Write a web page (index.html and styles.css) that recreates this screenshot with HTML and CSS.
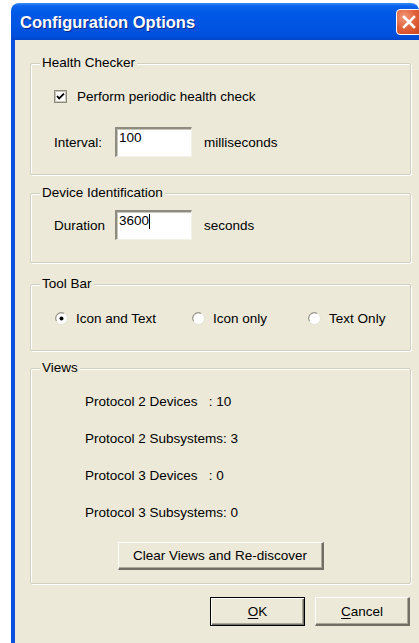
FILE: index.html
```html
<!DOCTYPE html>
<html>
<head>
<meta charset="utf-8">
<title>Configuration Options</title>
<link rel="stylesheet" href="styles.css">
</head>
<body>
<div class="window">
  <div class="titlebar">
    <span class="title">Configuration Options</span>
    <span class="close">
      <svg width="26" height="26" viewBox="0 0 26 26">
        <path d="M8 8 L18 18 M18 8 L8 18" stroke="#fff" stroke-width="2.6" stroke-linecap="square"/>
      </svg>
    </span>
  </div>
  <div class="client">
    <div class="group group-health">
      <span class="legend">Health Checker</span>
      <div class="row row-check">
        <svg class="checkbox" width="13" height="13" viewBox="0 0 13 13">
          <rect x="0.5" y="0.5" width="12" height="12" fill="#fff" stroke="#8d8b80"/>
          <rect x="1.5" y="1.5" width="10" height="10" fill="none" stroke="#c9c6b8"/>
          <path d="M3 6 L5.2 8.4 L10 3.6" fill="none" stroke="#000" stroke-width="1.8"/>
        </svg>
        <span>Perform periodic health check</span>
      </div>
      <div class="row row-field">
        <span class="field-label">Interval:</span>
        <span class="input">100</span>
        <span class="unit">milliseconds</span>
      </div>
    </div>

    <div class="group group-device">
      <span class="legend">Device Identification</span>
      <div class="row row-field">
        <span class="field-label">Duration</span>
        <span class="input">3600<span class="caret"></span></span>
        <span class="unit">seconds</span>
      </div>
    </div>

    <div class="group group-toolbar">
      <span class="legend">Tool Bar</span>
      <div class="row row-radios">
        <label class="radio radio-1">
          <svg width="13" height="13" viewBox="0 0 13 13">
            <circle cx="6.5" cy="6.5" r="6" fill="#fff" stroke="#e4e2d6"/>
            <path d="M1.5 9 A5.5 5.5 0 0 1 9 1.5" fill="none" stroke="#9a988c" stroke-width="1.2"/>
            <circle cx="6.5" cy="6.5" r="2" fill="#000"/>
          </svg>
          <span>Icon and Text</span>
        </label>
        <label class="radio radio-2">
          <svg width="13" height="13" viewBox="0 0 13 13">
            <circle cx="6.5" cy="6.5" r="6" fill="#fff" stroke="#e4e2d6"/>
            <path d="M1.5 9 A5.5 5.5 0 0 1 9 1.5" fill="none" stroke="#9a988c" stroke-width="1.2"/>
          </svg>
          <span>Icon only</span>
        </label>
        <label class="radio radio-3">
          <svg width="13" height="13" viewBox="0 0 13 13">
            <circle cx="6.5" cy="6.5" r="6" fill="#fff" stroke="#e4e2d6"/>
            <path d="M1.5 9 A5.5 5.5 0 0 1 9 1.5" fill="none" stroke="#9a988c" stroke-width="1.2"/>
          </svg>
          <span>Text Only</span>
        </label>
      </div>
    </div>

    <div class="group group-views">
      <span class="legend">Views</span>
      <div class="stats">
        <div class="stat">Protocol 2 Devices   : 10</div>
        <div class="stat">Protocol 2 Subsystems: 3</div>
        <div class="stat">Protocol 3 Devices   : 0</div>
        <div class="stat">Protocol 3 Subsystems: 0</div>
      </div>
      <div class="center">
        <button class="btn btn-clear">Clear Views and Re-discover</button>
      </div>
    </div>

    <div class="actions">
      <button class="btn btn-default"><u>O</u>K</button>
      <button class="btn"><u>C</u>ancel</button>
    </div>
  </div>
</div>
</body>
</html>
```

FILE: styles.css
```css
html, body {
  margin: 0;
  padding: 0;
  background: #fff;
  overflow: hidden;
  width: 419px;
  height: 643px;
}

body {
  font-family: "Liberation Sans", Arial, sans-serif;
  font-size: 13.5px;
  color: #000;
}

.window {
  margin: 3px 0 0 11px;
  width: 408px;
}

/* title bar; the window continues past the right edge, so the close box is clipped */
.titlebar {
  height: 37px;
  border-radius: 8px 8px 0 0;
  background: linear-gradient(#3a8cf8 0%, #0a63ec 8%, #0058e6 30%, #0055e2 60%, #0050dc 88%, #0046cc 100%);
  display: flex;
  align-items: center;
  padding: 0 0 0 9px;
  box-sizing: border-box;
  overflow: hidden;
}

.title {
  color: #fff;
  font-weight: bold;
  font-size: 16.5px;
  text-shadow: 1px 1px 0 #0a2a8a;
  margin-top: 1px;
  white-space: nowrap;
}

.close {
  margin-left: auto;
  margin-right: -3px;
  flex: 0 0 26px;
  width: 26px;
  height: 26px;
  border: 1px solid #fff;
  border-radius: 4px;
  box-sizing: border-box;
  background: radial-gradient(circle at 30% 30%, #f29a7c 0%, #e2623b 45%, #c7401c 100%);
  display: flex;
  align-items: center;
  justify-content: center;
  margin-top: 1px;
}

.close svg {
  display: block;
  margin: -1px;
}

/* client area */
.client {
  background: #ece9d8;
  border-left: 4px solid #0a4fe0;
  height: 603px;
  box-sizing: border-box;
  padding: 23px 0 0 15px;
}

.group {
  position: relative;
  width: 381px;
  box-sizing: border-box;
  border: 1px solid #d0d0bf;
  border-radius: 2px;
  box-shadow: 1px 1px 0 #fff, inset 1px 1px 0 #fff;
}

.legend {
  position: absolute;
  top: -9px;
  left: 9px;
  padding: 0 2px;
  background: #ece9d8;
  line-height: 16px;
}

.group-health {
  height: 112px;
  padding: 24px 0 0 23px;
}

.group-device {
  margin-top: 18px;
  height: 70px;
  padding: 16px 0 0 0;
}

.group-toolbar {
  margin-top: 21px;
  height: 67px;
  padding: 25px 0 0 0;
}

.group-views {
  margin-top: 17px;
  height: 216px;
  padding: 25px 0 0 0;
}

.row {
  display: flex;
  align-items: center;
}

.row-check {
  height: 16px;
}

.checkbox {
  display: block;
  margin-right: 10px;
}

.row-field {
  margin-top: 23px;
  height: 30px;
}

.group-device .row-field {
  margin-top: 0;
  padding-left: 23px;
}

.field-label {
  width: 61px;
}

.input {
  width: 77px;
  height: 30px;
  box-sizing: border-box;
  background: #fff;
  border-style: solid;
  border-width: 2px 1px 1px 2px;
  border-color: #8e8c82 #f2f1ea #f2f1ea #8e8c82;
  box-shadow: inset 1px 1px 0 #c9c6b8;
  padding: 1px 0 0 2px;
  line-height: 16px;
  display: flex;
  align-items: flex-start;
}

.caret {
  display: inline-block;
  width: 1px;
  height: 15px;
  background: #000;
  margin-top: 1px;
}

.unit {
  margin-left: 12px;
}

.row-radios {
  height: 16px;
}

.radio {
  display: flex;
  align-items: center;
}

.radio svg {
  display: block;
  margin-right: 8px;
}

.radio-1 { margin-left: 24px; }
.radio-2 { margin-left: 36px; }
.radio-3 { margin-left: 41px; }

.stats {
  padding-left: 54px;
}

.stat {
  white-space: pre;
  height: 16px;
  line-height: 16px;
  margin-bottom: 21px;
}

.center {
  display: flex;
  justify-content: center;
  margin-top: 1px;
}

.btn {
  font-family: inherit;
  font-size: 13.5px;
  color: #000;
  background: #ece9d8;
  border-style: solid;
  border-width: 1px 2px 2px 1px;
  border-color: #fff #716f64 #716f64 #fff;
  box-shadow: inset -1px -1px 0 #aca899;
  padding: 0;
  margin: 0;
  height: 28px;
  box-sizing: border-box;
}

.btn-clear {
  width: 206px;
}

.actions {
  display: flex;
  gap: 10px;
  padding-left: 180px;
  margin-top: 13px;
}

.actions .btn {
  width: 95px;
  height: 29px;
}

.btn-default {
  border: 1px solid #000;
  box-shadow: inset 1px 1px 0 #fff, inset -1px -1px 0 #716f64, inset -2px -2px 0 #aca899;
}

.btn u {
  text-underline-offset: 2px;
}
```
